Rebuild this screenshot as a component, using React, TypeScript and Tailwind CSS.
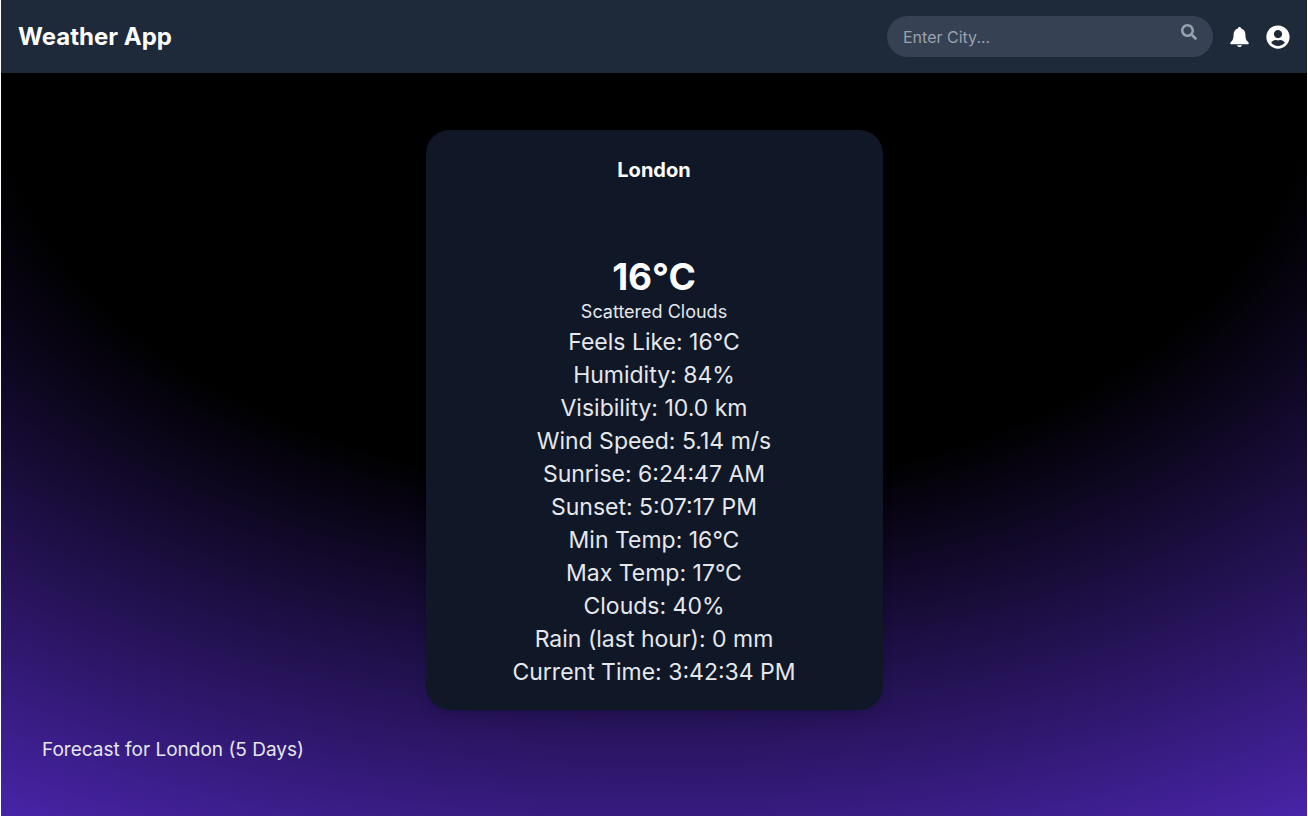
import { FormEvent } from "react";
import { FaSearch, FaUserCircle } from "react-icons/fa";

const details = [
  "Feels Like: 16°C",
  "Humidity: 84%",
  "Visibility: 10.0 km",
  "Wind Speed: 5.14 m/s",
  "Sunrise: 6:24:47 AM",
  "Sunset: 5:07:17 PM",
  "Min Temp: 16°C",
  "Max Temp: 17°C",
  "Clouds: 40%",
  "Rain (last hour): 0 mm",
  "Current Time: 3:42:34 PM",
];

function BellIcon() {
  return (
    <svg width="19" height="20" viewBox="0 0 19 20" fill="currentColor" aria-hidden="true">
      <path d="M9.5 0C8.6 0 8 .6 7.9 1.4C5.2 2.1 3.7 4.3 3.6 7.2C3.5 11.5 2.9 13.2 1.3 14.6C.6 15.2.2 15.800.2 16.5C.2 17 .6 17.3 1.2 17.3H17.8C18.4 17.3 18.8 17 18.8 16.5C18.8 15.800 18.4 15.2 17.7 14.6C16.1 13.2 15.5 11.5 15.4 7.2C15.3 4.3 13.8 2.1 11.1 1.4C11 .6 10.4 0 9.500 0Z" />
      <path d="M7 18.2H12C11.7 19.3 10.7 20 9.5 20S7.3 19.3 7 18.2Z" />
    </svg>
  );
}

function Navbar() {
  return (
    <nav className="flex items-center justify-between bg-gray-800 px-[17px] py-4">
      <h1 className="text-2xl font-bold">Weather App</h1>
      <div className="flex items-center gap-[17px]">
        <form
          className="flex h-[41px] w-[326px] rounded-full bg-gray-700 px-4"
          onSubmit={(e: FormEvent) => e.preventDefault()}
        >
          <input
            aria-label="City"
            placeholder="Enter City..."
            className="min-w-0 flex-1 bg-transparent text-base outline-none placeholder:text-gray-400"
          />
          <button aria-label="Search" className="self-start pt-2 text-gray-400">
            <FaSearch size={16} />
          </button>
        </form>
        <button aria-label="Notifications">
          <BellIcon />
        </button>
        <button aria-label="Account">
          <FaUserCircle size={24} />
        </button>
      </div>
    </nav>
  );
}

export default function App() {
  return (
    <div className="bg-white px-px font-['Inter',sans-serif] text-white">
      <div className="min-h-screen bg-[radial-gradient(125%_125%_at_50%_10%,#000_40%,#6633ee_100%)]">
        <Navbar />
        <main className="px-[41px] pt-[57px]">
          <section className="mx-auto flex w-[457px] max-w-full flex-col items-center rounded-3xl bg-gray-900 pt-6 pb-[21px] text-center shadow-lg">
            <h2 className="text-xl leading-8 font-bold">London</h2>
            <p className="mt-[70px] text-[37px] leading-[42px] font-bold">16°C</p>
            <p className="text-lg leading-7 text-gray-200">Scattered Clouds</p>
            <ul className="text-[23px] leading-[33px] text-gray-200">
              {details.map((line) => (
                <li key={line}>{line}</li>
              ))}
            </ul>
          </section>
          <h3 className="mt-[25px] text-[19px] leading-[30px] text-gray-200">Forecast for London (5 Days)</h3>
        </main>
      </div>
    </div>
  );
}
